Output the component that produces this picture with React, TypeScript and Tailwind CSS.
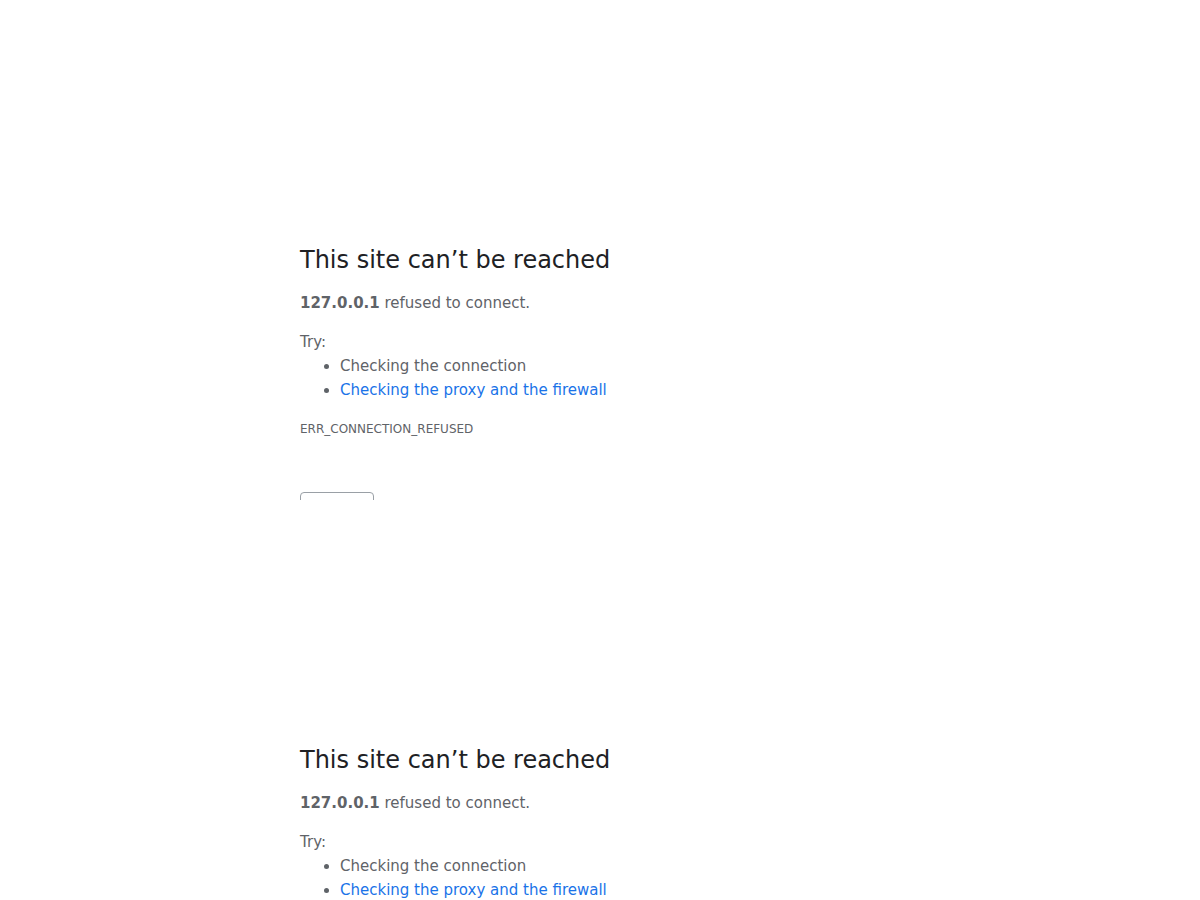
import React from 'react';

function ErrorFrame() {
  return (
    <div className="h-[500px] overflow-hidden bg-white">
      <div className="mx-auto w-[600px] pt-[245px] text-[15px] leading-[24px] text-[#5f6368]">
        <h1 className="mb-[16px] text-[24px] leading-[30px] font-normal text-[#202124]">
          This site can’t be reached
        </h1>
        <p>
          <strong className="font-bold">127.0.0.1</strong> refused to connect.
        </p>
        <div className="mt-[15px]">
          <p>Try:</p>
          <ul className="list-disc pl-[40px]">
            <li>Checking the connection</li>
            <li>
              <a className="text-[#1a73e8]" href="#">
                Checking the proxy and the firewall
              </a>
            </li>
          </ul>
        </div>
        <div className="mt-[15px] text-[12px] uppercase">ERR_CONNECTION_REFUSED</div>
        <div className="mt-[51px]">
          <button
            type="button"
            className="h-[36px] w-[74px] rounded-[4px] border border-[#9aa0a6] bg-white"
          ></button>
        </div>
      </div>
    </div>
  );
}

export default function App() {
  return (
    <div className="h-[900px] overflow-hidden bg-white" style={{ fontFamily: '"DejaVu Sans", sans-serif' }}>
      <ErrorFrame />
      <ErrorFrame />
    </div>
  );
}
